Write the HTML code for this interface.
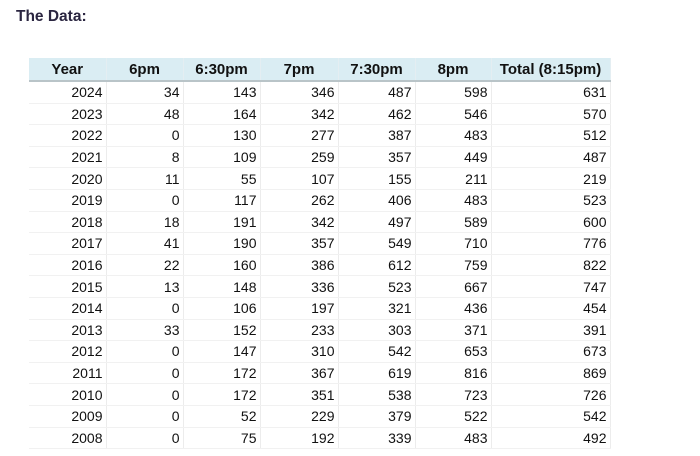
<!DOCTYPE html>
<html><head><style>
body{margin:0;background:#fff;width:700px;height:456px;overflow:hidden;font-family:"Liberation Sans",sans-serif}
h1{position:absolute;left:16px;top:8px;margin:0;font-size:15.5px;font-weight:bold;color:#2a2540}
table{position:absolute;left:29px;top:58px;border-collapse:collapse;table-layout:fixed;font-size:14px;color:#111}
td,th{padding:0 3px 0 0;text-align:right;border-right:1px solid #ececec;border-bottom:1px solid #f1f1f1;white-space:nowrap;overflow:hidden}
th{height:22px;background:#daedf3;text-align:center;font-weight:bold;font-size:15px;border-bottom:2px solid #b9c4c8;border-right:1px solid #e4eef2;padding:0}
td{height:20.6px}
</style></head><body>
<h1>The Data:</h1>
<table>
<colgroup><col style="width:77px"><col style="width:77px"><col style="width:77px"><col style="width:78px"><col style="width:77px"><col style="width:76px"><col style="width:119px"></colgroup>
<tr><th>Year</th><th>6pm</th><th>6:30pm</th><th>7pm</th><th>7:30pm</th><th>8pm</th><th>Total (8:15pm)</th></tr>
<tr><td>2024</td><td>34</td><td>143</td><td>346</td><td>487</td><td>598</td><td>631</td></tr>
<tr><td>2023</td><td>48</td><td>164</td><td>342</td><td>462</td><td>546</td><td>570</td></tr>
<tr><td>2022</td><td>0</td><td>130</td><td>277</td><td>387</td><td>483</td><td>512</td></tr>
<tr><td>2021</td><td>8</td><td>109</td><td>259</td><td>357</td><td>449</td><td>487</td></tr>
<tr><td>2020</td><td>11</td><td>55</td><td>107</td><td>155</td><td>211</td><td>219</td></tr>
<tr><td>2019</td><td>0</td><td>117</td><td>262</td><td>406</td><td>483</td><td>523</td></tr>
<tr><td>2018</td><td>18</td><td>191</td><td>342</td><td>497</td><td>589</td><td>600</td></tr>
<tr><td>2017</td><td>41</td><td>190</td><td>357</td><td>549</td><td>710</td><td>776</td></tr>
<tr><td>2016</td><td>22</td><td>160</td><td>386</td><td>612</td><td>759</td><td>822</td></tr>
<tr><td>2015</td><td>13</td><td>148</td><td>336</td><td>523</td><td>667</td><td>747</td></tr>
<tr><td>2014</td><td>0</td><td>106</td><td>197</td><td>321</td><td>436</td><td>454</td></tr>
<tr><td>2013</td><td>33</td><td>152</td><td>233</td><td>303</td><td>371</td><td>391</td></tr>
<tr><td>2012</td><td>0</td><td>147</td><td>310</td><td>542</td><td>653</td><td>673</td></tr>
<tr><td>2011</td><td>0</td><td>172</td><td>367</td><td>619</td><td>816</td><td>869</td></tr>
<tr><td>2010</td><td>0</td><td>172</td><td>351</td><td>538</td><td>723</td><td>726</td></tr>
<tr><td>2009</td><td>0</td><td>52</td><td>229</td><td>379</td><td>522</td><td>542</td></tr>
<tr><td>2008</td><td>0</td><td>75</td><td>192</td><td>339</td><td>483</td><td>492</td></tr>
</table>
</body></html>
